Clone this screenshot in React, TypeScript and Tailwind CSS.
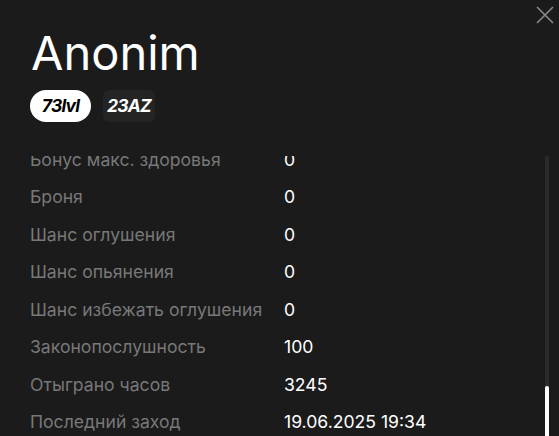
const stats = [
  { label: "Бонус макс. здоровья", value: "0" },
  { label: "Броня", value: "0" },
  { label: "Шанс оглушения", value: "0" },
  { label: "Шанс опьянения", value: "0" },
  { label: "Шанс избежать оглушения", value: "0" },
  { label: "Законопослушность", value: "100" },
  { label: "Отыграно часов", value: "3245" },
  { label: "Последний заход", value: "19.06.2025 19:34" },
];

const CloseIcon = () => (
  <svg width="18" height="18" viewBox="0 0 18 18" fill="none">
    <path d="M1 1L17 17M17 1L1 17" stroke="#8a8a8a" strokeWidth="1.6" />
  </svg>
);

const StatRow = ({ label, value }: { label: string; value: string }) => {
  return (
    <div className="flex h-[37.5px] items-center text-[17.6px]">
      <div className="w-[254px] shrink-0 text-[#787878]">{label}</div>
      <div className="text-white">{value}</div>
    </div>
  );
};

export default function App() {
  return (
    <div
      className="relative flex h-[436px] w-[559px] flex-col overflow-hidden bg-[#1b1b1b]"
      style={{ fontFamily: "Inter, 'Noto Sans', sans-serif" }}
    >
      <button className="absolute right-[5px] top-[6px]">
        <CloseIcon />
      </button>

      <div className="px-[30px] pt-[25px]">
        <div className="pl-px text-[47px] leading-[56px] text-white">Anonim</div>
        <div className="mt-[9px] flex gap-3">
          <span className="flex h-8 w-[61px] items-center justify-center rounded-full bg-white text-[17.5px] font-bold italic tracking-[-0.8px] text-black">
            73lvl
          </span>
          <span className="flex h-8 w-[52px] items-center justify-center rounded-md bg-[#242424] text-[17.5px] font-bold italic tracking-[-0.8px] text-white">
            23AZ
          </span>
        </div>
      </div>

      <div className="relative mt-[34px] flex-1 overflow-hidden">
        <div className="-mt-[14.75px] flex flex-col px-[30px]">
          {stats.map((s) => (
            <StatRow key={s.label} label={s.label} value={s.value} />
          ))}
        </div>
        <div className="absolute bottom-0 right-[10px] top-0 flex w-1 flex-col justify-end bg-[#2a2a2a]">
          <div className="h-[50px] rounded-t-sm bg-white" />
        </div>
      </div>
    </div>
  );
}
